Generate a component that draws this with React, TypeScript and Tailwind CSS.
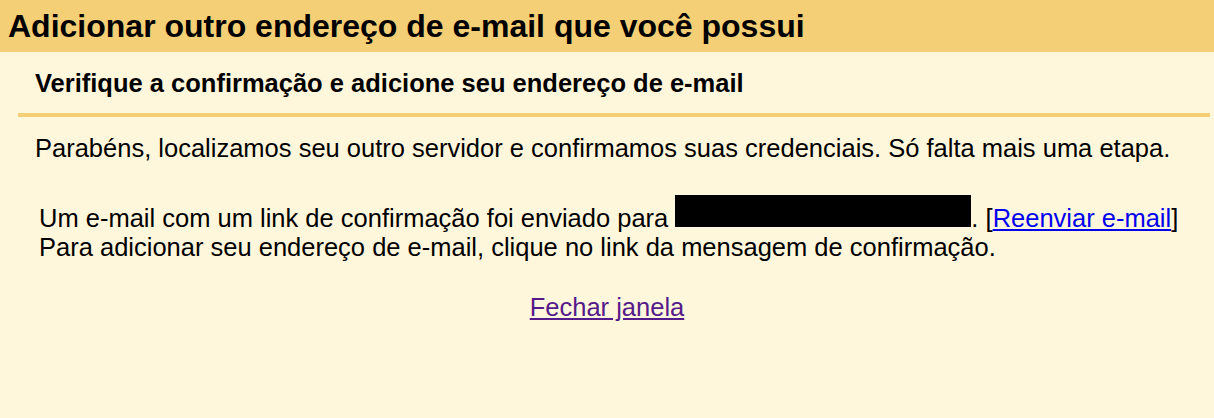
export default function App() {
  return (
    <div
      className="min-h-[418px] w-full bg-[#fff7db] text-black"
      style={{ fontFamily: '"Liberation Sans", Arial, sans-serif' }}
    >
      <header className="flex h-[52px] items-center bg-[#f4cf75] pl-[8px]">
        <h1 className="text-[32px] font-bold leading-none">
          Adicionar outro endereço de e-mail que você possui
        </h1>
      </header>

      <div className="ml-[18px] mr-[4px]">
        <h2 className="pt-[16px] pb-[15px] pl-[17px] text-[25.5px] font-bold leading-[30px]">
          Verifique a confirmação e adicione seu endereço de e-mail
        </h2>
        <div className="h-[4px] bg-[#f4cf75]" />

        <p className="pl-[17px] pt-[16px] text-[25.5px] leading-[30px]">
          Parabéns, localizamos seu outro servidor e confirmamos suas credenciais. Só falta mais uma etapa.
        </p>

        <div className="pl-[21px] pt-[41px] text-[25.5px] leading-[29px]">
          <p>
            Um e-mail com um link de confirmação foi enviado para{" "}
            <span className="-mt-[10px] inline-block h-[32px] w-[296px] bg-black align-baseline" />
            . [
            <a href="#" className="text-[#0000ee] underline">Reenviar e-mail</a>]
          </p>
          <p>Para adicionar seu endereço de e-mail, clique no link da mensagem de confirmação.</p>
        </div>
      </div>

      <div className="pt-[30px] text-center text-[25.5px] leading-[30px]">
        <a href="#" className="text-[#551a8b] underline">Fechar janela</a>
      </div>
    </div>
  );
}
